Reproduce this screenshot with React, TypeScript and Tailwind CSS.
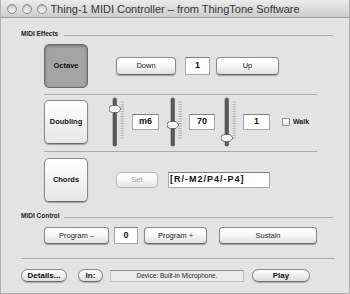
import React from "react";

const Button = ({
  label,
  className = "",
  disabled = false,
}: {
  label: string;
  className?: string;
  disabled?: boolean;
}) => (
  <div
    className={`flex items-center justify-center rounded-[4px] border bg-linear-to-b from-white via-[#f7f7f7] to-[#e0e0e0] text-[7.5px] ${
      disabled
        ? "text-[#a0a0a0] border-[#b4b4b4]"
        : "text-[#1c1c1c] border-[#8a8a8a] border-b-[#6a6a6a] shadow-[0_1px_1px_rgba(0,0,0,0.3)]"
    } ${className}`}
  >
    {label}
  </div>
);

const BigButton = ({ label, pressed = false }: { label: string; pressed?: boolean }) => (
  <div
    className={`flex h-[44px] w-[44px] shrink-0 items-center justify-center rounded-[5px] border text-[7.5px] font-bold text-[#111] ${
      pressed
        ? "border-[#6a6a6a] bg-[#a4a4a4] shadow-[inset_0_1px_3px_rgba(0,0,0,0.35)]"
        : "border-[#8a8a8a] border-b-[#6a6a6a] bg-linear-to-b from-white to-[#e6e6e6] shadow-[0_1px_1px_rgba(0,0,0,0.3)]"
    }`}
  >
    {label}
  </div>
);

const Field = ({ value, className = "" }: { value: string; className?: string }) => (
  <div
    className={`flex items-center justify-center border border-[#a8a8a8] border-t-[#808080] bg-white text-[9px] font-bold text-[#111] ${className}`}
  >
    {value}
  </div>
);

const Pill = ({ label, className = "" }: { label: string; className?: string }) => (
  <div
    className={`flex h-[13px] items-center justify-center rounded-full border border-[#8a8a8a] border-b-[#6a6a6a] bg-linear-to-b from-white to-[#dedede] text-[8px] font-bold text-[#111] shadow-[0_1px_1px_rgba(0,0,0,0.25)] ${className}`}
  >
    {label}
  </div>
);

const Slider = ({ knob, className = "" }: { knob: number; className?: string }) => {
  const ticks = Array.from({ length: 16 }, (_, i) => 5 + i * 2.4);
  return (
    <svg width="17" height="50" viewBox="0 0 17 50" className={className}>
      <rect x="4" y="1" width="3.5" height="48" rx="1.5" fill="#5a5a5a" stroke="#3a3a3a" strokeWidth="0.5" />
      {ticks.map((y) => (
        <line key={y} x1="11.5" x2="15" y1={y} y2={y} stroke="#a5a5a5" strokeWidth="0.8" />
      ))}
      <path
        d={`M3.5 ${knob - 3.5} h5.5 l3 3.5 l-3 3.5 h-5.5 a3.5 3.5 0 0 1 0 -7 z`}
        fill="#f4f4f4"
        stroke="#555"
        strokeWidth="0.8"
      />
    </svg>
  );
};

const Header = ({ label, lineStart }: { label: string; lineStart: string }) => (
  <div className="flex h-[9px] items-end">
    <span className="ml-[20px] text-[6.5px] font-bold leading-[7px] text-[#222]">{label}</span>
    <div className={`mb-px h-px flex-1 bg-[#a9a9a9] ${lineStart} mr-[16px]`} />
  </div>
);

const Light = () => (
  <div className="h-[10px] w-[10px] rounded-full border border-[#8f8f8f] bg-linear-to-b from-[#d4d4d4] to-[#f2f2f2] shadow-[inset_0_1px_1px_rgba(0,0,0,0.2)]" />
);

export default function App() {
  return (
    <div className="flex h-[294px] w-[350px] flex-col overflow-hidden border-x border-b border-[#b0b0b0] bg-[#e3e3e3] font-['Liberation_Sans',Arial,sans-serif]">
      <div className="relative flex h-[18px] shrink-0 items-center border-b border-[#9a9a9a] bg-linear-to-b from-[#ebebeb] to-[#cdcdcd]">
        <div className="ml-[6px] flex gap-[5px]">
          <Light />
          <Light />
          <Light />
        </div>
        <div className="absolute inset-x-0 text-center text-[11px] leading-[18px] text-[#333]">
          Thing-1 MIDI Controller – from ThingTone Software
        </div>
      </div>

      <div className="mt-[10px]">
        <Header label="MIDI Effects" lineStart="ml-[6px]" />
      </div>

      <div className="ml-[43px] mt-[7px] flex items-center">
        <BigButton label="Octave" pressed />
        <Button label="Down" className="ml-[28px] h-[18px] w-[60px]" />
        <Field value="1" className="ml-[9px] h-[18px] w-[25px]" />
        <Button label="Up" className="ml-[6px] h-[18px] w-[63px]" />
      </div>

      <div className="ml-[43px] mt-[6px] h-px w-[273px] bg-[#a9a9a9]" />

      <div className="ml-[43px] mt-[5px] flex h-[44px] items-center">
        <BigButton label="Doubling" />
        <Slider knob={12} className="ml-[21px] shrink-0" />
        <Field value="m6" className="ml-[6px] h-[16px] w-[27px]" />
        <Slider knob={28} className="ml-[8px] shrink-0" />
        <Field value="70" className="ml-[5px] h-[16px] w-[26px]" />
        <Slider knob={41} className="ml-[6px] shrink-0" />
        <Field value="1" className="ml-[5px] h-[16px] w-[27px]" />
        <div className="ml-[12px] h-[8px] w-[8px] rounded-[1px] border border-[#8a8a8a] bg-linear-to-b from-white to-[#e8e8e8]" />
        <span className="ml-[3px] text-[7px] font-bold text-[#222]">Walk</span>
      </div>

      <div className="ml-[43px] mt-[7px] h-px w-[273px] bg-[#a9a9a9]" />

      <div className="ml-[43px] mt-[6px] flex items-center">
        <BigButton label="Chords" />
        <Button label="Set" disabled className="ml-[28px] h-[16px] w-[42px]" />
        <Field
          value="[R/-M2/P4/-P4]"
          className="ml-[10px] h-[16px] w-[102px] !justify-start pl-[1px] tracking-[1px]"
        />
      </div>

      <div className="mt-[8px]">
        <Header label="MIDI Control" lineStart="ml-[4px]" />
      </div>

      <div className="ml-[43px] mt-[8px] flex items-center">
        <Button label="Program –" className="h-[17px] w-[65px]" />
        <Field value="0" className="ml-[5px] h-[17px] w-[24px]" />
        <Button label="Program +" className="ml-[6px] h-[17px] w-[63px]" />
        <Button label="Sustain" className="ml-[12px] h-[17px] w-[98px]" />
      </div>

      <div className="ml-[20px] mt-[14px] h-px w-[314px] bg-[#a9a9a9]" />

      <div className="ml-[20px] mt-[10px] flex items-center">
        <Pill label="Details..." className="w-[46px]" />
        <Pill label="In:" className="ml-[11px] w-[25px]" />
        <div className="ml-[7px] flex h-[12px] w-[134px] items-center justify-center border border-[#bdbdbd] border-t-[#8e8e8e] bg-[#ebebeb] text-[6.5px] text-[#222]">
          Device: Built-in Microphone.
        </div>
        <Pill label="Play" className="ml-[8px] w-[58px]" />
      </div>
    </div>
  );
}
